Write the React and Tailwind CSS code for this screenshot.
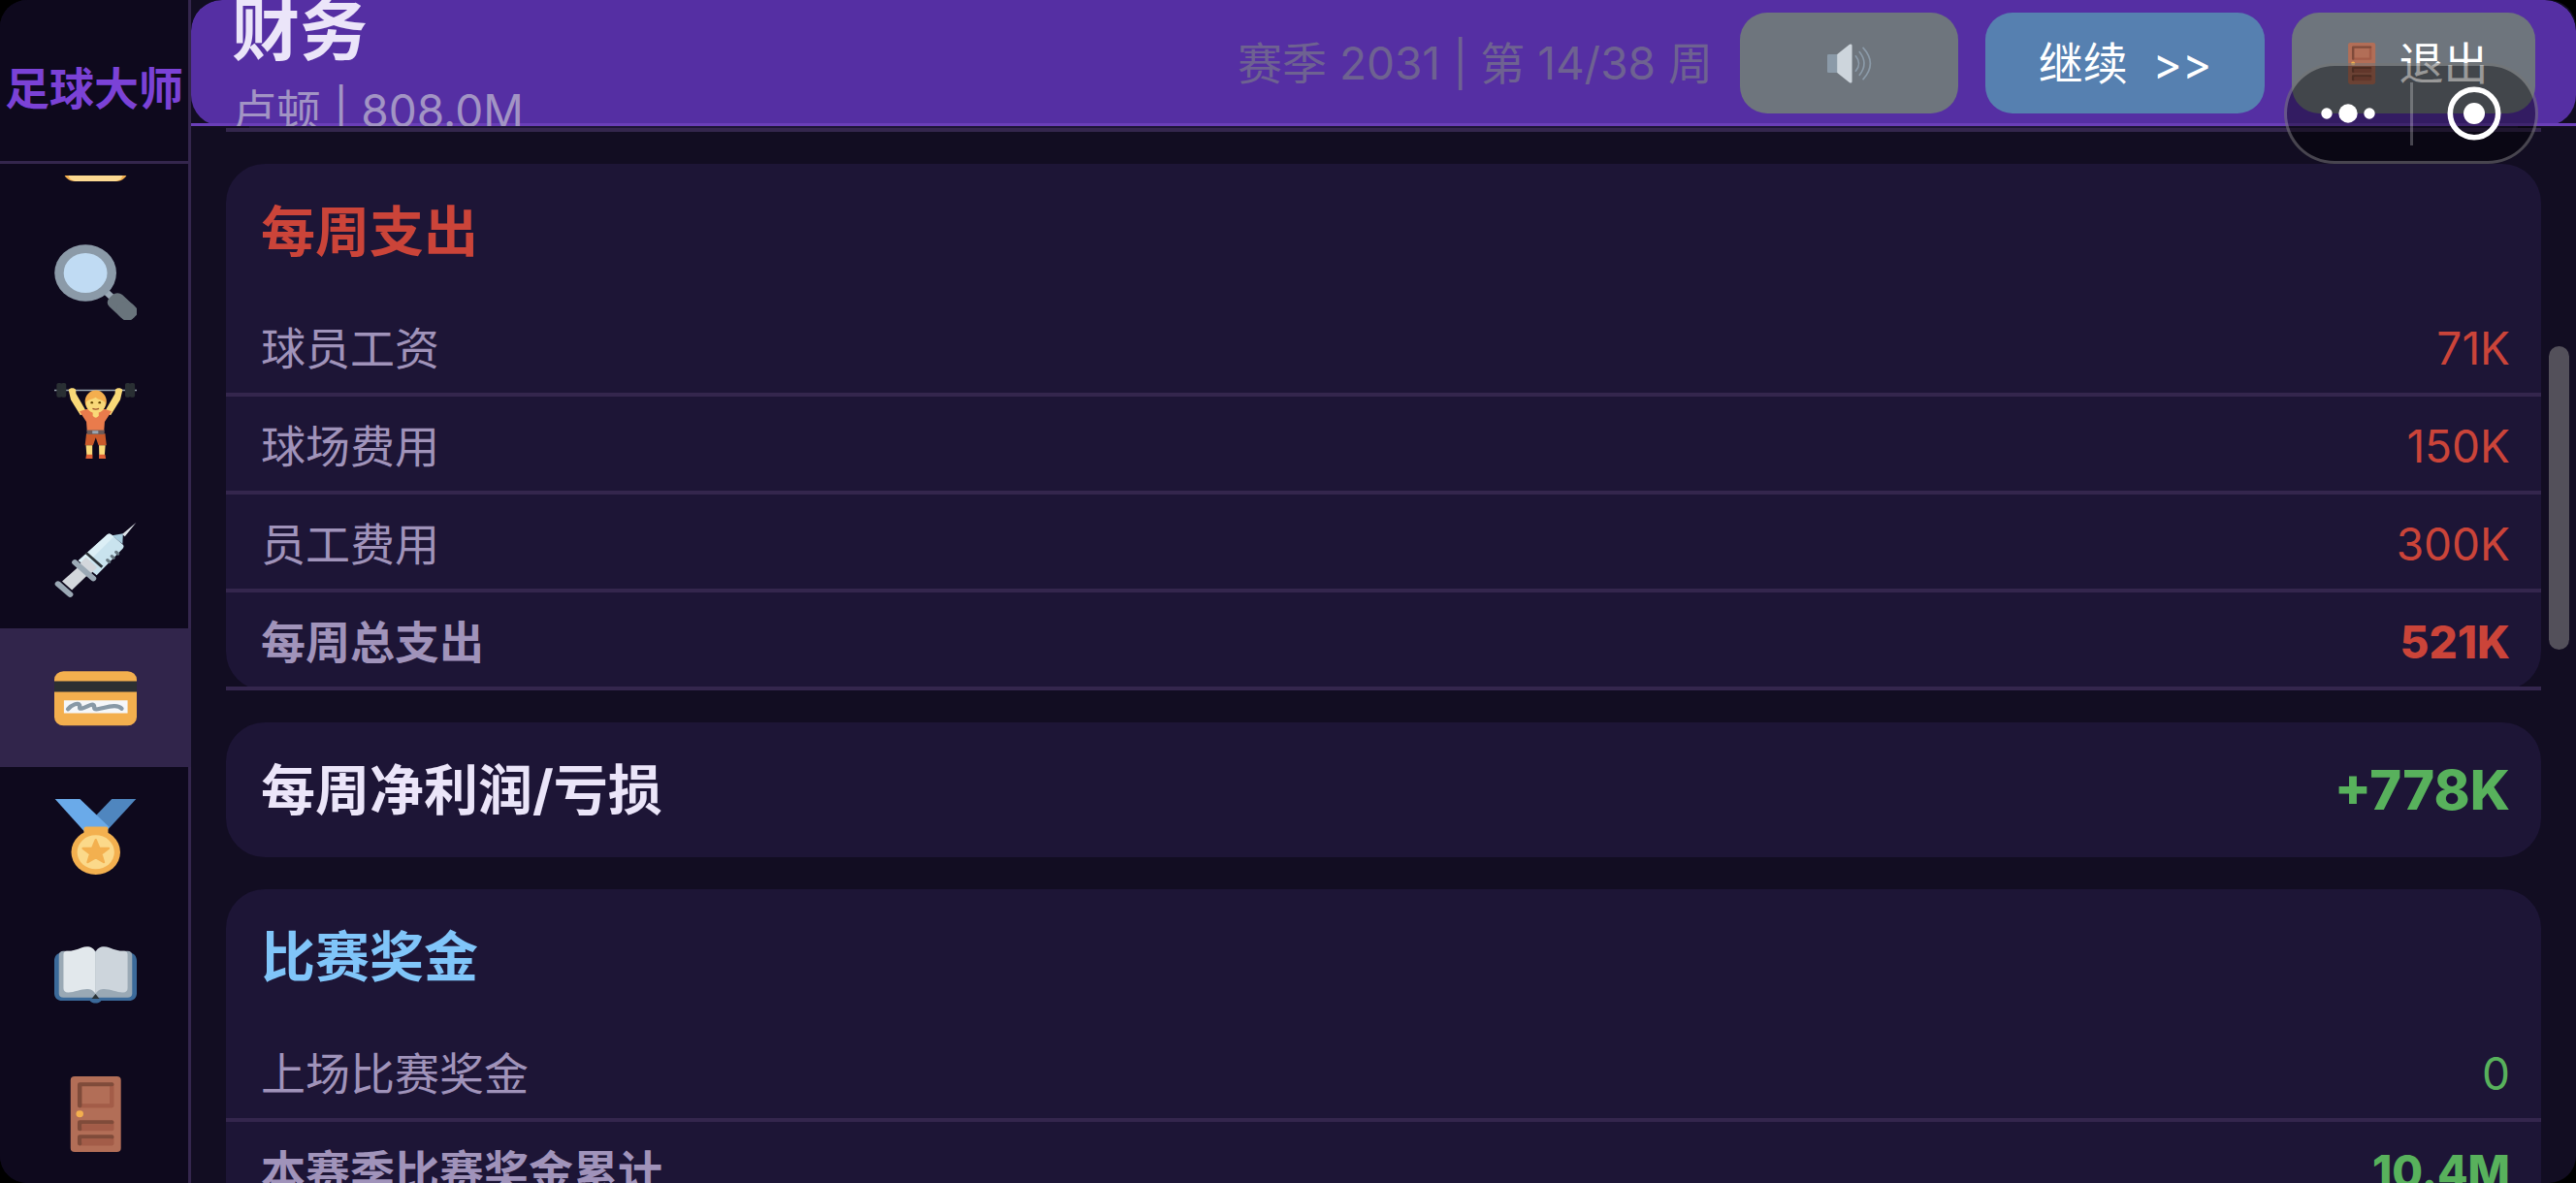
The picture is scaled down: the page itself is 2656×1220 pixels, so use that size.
import { useState } from 'react';

function Icon({ children, className = 'w-[85px] h-[78px]' }) {
  return (
    <svg viewBox="0 0 36 36" preserveAspectRatio="none" className={className} aria-hidden="true">
      {children}
    </svg>
  );
}

function NoteIcon() {
  return (
    <Icon>
      <rect x="4" y="0" width="28" height="36" rx="5" fill="#f4b050" />
      <path fill="#fcd992" d="M6 3h24v29c0 2.500-1.500 4-4 4H10c-2.500 0-4-1.500-4-4z" />
    </Icon>
  );
}

function SearchIcon() {
  return (
    <Icon>
      <g transform="rotate(45)">
        <rect x="31" y="-1.5" width="6" height="3" fill="#9aa8b5" />
        <rect x="35" y="-4" width="14.200" height="8" rx="3" fill="#69747c" />
        <rect x="40" y="-4" width="9.200" height="8" rx="4" fill="#69747c" />
      </g>
      <circle cx="13.600" cy="13.600" r="13.500" fill="#8b9aa8" />
      <circle cx="13.600" cy="13.600" r="9.500" fill="#c0dbf3" />
    </Icon>
  );
}

function LifterIcon() {
  return (
    <Icon>
      <path fill="#99a5b0" d="M0 3.100h36v.7H0z" />
      <g fill="#292f33">
        <rect x="1" y="0" width="2.300" height="6.800" rx=".8" />
        <rect x="2.900" y="0" width="2.300" height="6.800" rx=".8" />
        <rect x="30.900" y="0" width="2.300" height="6.800" rx=".8" />
        <rect x="32.900" y="0" width="2.300" height="6.800" rx=".8" />
      </g>
      <path fill="#f9d978" d="M6.200 3.200c.6-1 2.800-1 3.200.1l.1 1.800 4.500 8.500-2.600 1.800L7.200 8zM29.800 3.200c-.6-1-2.800-1-3.200.1l-.1 1.800-4.500 8.500 2.600 1.800L28.800 8z" />
      <path fill="#e97b4c" d="M14 12.500h8.200l2.800 1-3 5-.3 4.500h-7.400l-.3-4.500-3-5z" />
      <path fill="#f9d978" d="M16.800 13h2.600v2.500c-.6 1.300-2 1.300-2.600 0z" />
      <ellipse cx="18.100" cy="8.800" rx="4.700" ry="5.300" fill="#f4ae4e" />
      <path fill="#f9d978" d="M13.900 9.500c.3-1.800 2.500-1.500 4.200-2.700 1 1.300 3.600 1.200 4.200 2.700 0 3-2 4.900-4.200 4.900s-4.200-1.900-4.200-4.900z" />
      <circle cx="16.400" cy="9.300" r=".55" fill="#664500" />
      <circle cx="19.800" cy="9.300" r=".55" fill="#664500" />
      <path d="M16.700 12.200q1.400.7 2.800 0" stroke="#a0522d" strokeWidth=".6" fill="none" />
      <path fill="#c95a2b" d="M14 24h8.200l.6 5.600h-3.500L18.100 26l-1.200 3.600h-3.500z" />
      <path fill="#6b5a58" d="M14.200 22.400h7.700v2h-7.700z" />
      <path fill="#99a5b0" d="M16.600 22.700h2.600v1.400h-2.600z" />
      <path fill="#f9d978" d="M13.800 29.600h2.800v4.600h-2.500zM19.500 29.600h2.800l-.3 4.600h-2.400z" />
      <path fill="#dd5f35" d="M14 34h2.700v2h-3zM19.500 34h2.700l.3 2h-3z" />
    </Icon>
  );
}

function SyringeIcon() {
  return (
    <Icon>
      <path fill="#dbe1e6" d="M35.800.4l-5 6.600-1.200-1z" />
      <path fill="#a7cbdc" d="M25.200 6.600l4.800-1-.2 5z" />
      <path fill="#c9e3ee" d="M23 6.200q1-.9 2 0l5 4.800q.7.900-.2 1.900L18.500 25.500l-8-7z" />
      <path fill="#dceff6" d="M23 6.200q1-.9 2 0l1 .9-12.500 13.500-3-2z" />
      <path fill="#d3d7dc" d="M13.800 16.800l4.900 5-4.200 4.400-4.700-4.600zM10.200 21.800l4 3.900-6.500 6.800-4.300-4.100z" />
      <path stroke="#2c3438" strokeWidth="1.200" d="M13.900 14.800l7 6.800" />
      <path stroke="#9ba9b5" strokeWidth="2.600" strokeLinecap="round" d="M9 19.400l8 7.600M1.600 29.600l5.300 5" />
      <path stroke="#66767f" strokeWidth="1.400" strokeLinecap="round" d="M23.200 18.300l.8.8M25.100 16.400l.8.8M27 14.500l.8.8" />
    </Icon>
  );
}

function CardIcon() {
  return (
    <Icon>
      <rect y="5.200" width="36" height="25.800" rx="4" fill="#f3af4e" />
      <path fill="#2b2f32" d="M0 9.900h36v5.100H0z" />
      <path fill="#f5f7f9" d="M4.200 19h27.800v6.200H4.200z" />
      <path
        stroke="#8899a6"
        strokeWidth="1.900"
        strokeLinecap="round"
        strokeLinejoin="round"
        fill="none"
        d="M6 23.200c1.500-2 4.500-3.300 5-1.900.4 1.200-.6 2 1.200 1.500 1.800-.5 4.800-2.700 5.100-1.300.3 1.300-.3 2 1.700 1.700 2.800-.4 8.300-3 10.400-.2"
      />
    </Icon>
  );
}

function MedalIcon() {
  return (
    <Icon>
      <path fill="#4f86bf" d="M25.100 0h10.600L22.800 15.200l-4.600-7.400z" />
      <path fill="#6aaae9" d="M.3 0h10.900l12.700 13.300-1.300 2.700h-9z" />
      <circle cx="18.100" cy="25.300" r="10.700" fill="#f3b04f" />
      <rect x="12.900" y="13.200" width="10.600" height="4" rx="1" fill="#f3b04f" />
      <circle cx="18.100" cy="25.300" r="8.100" fill="#fbd98a" />
      <path
        fill="#f3b04f"
        stroke="#f3b04f"
        strokeLinejoin="round"
        d="M18.100 19.400l1.500 4 4.100.1-3.200 2.600 1.100 4-3.500-2.300-3.500 2.300 1.100-4-3.200-2.600 4.100-.1z"
      />
    </Icon>
  );
}

function BookIcon() {
  return (
    <Icon>
      <path fill="#3b6a9a" d="M3 7h30c2 .5 3 2 3 4v15.500c0 2-1.300 3.500-3.500 3.500H20.500c-1.300 1.600-3.700 1.600-5 0h-12C1.300 30 0 28.500 0 26.500V11c0-2 1-3.500 3-4z" />
      <path fill="#9aa9b5" d="M4 6.400h28c1.300 0 2 .8 2 2v18.200c0 1.200-.8 1.900-2 1.900H4c-1.200 0-2-.7-2-1.900V8.400c0-1.200.7-2 2-2z" />
      <path fill="#2c3438" d="M18 26.800l1.700 2.300h-3.400z" />
      <path fill="#e2e8ec" d="M18 7c-.8-2.700-3.500-3.200-6-2.300-2.300.9-4 1.700-6.500 1.700C4.500 6.400 4 7 4 8v16c0 1.400.8 2.200 2.200 2.100 3.800-.2 9.500-4 11.800.7z" />
      <path fill="#cdd5dc" d="M18 7c.8-2.700 3.500-3.200 6-2.300 2.300.9 4 1.700 6.500 1.700 1 0 1.500.6 1.500 1.600v16c0 1.400-.8 2.200-2.200 2.100-3.800-.2-9.500-4-11.800.7z" />
    </Icon>
  );
}

function DoorIcon({ className }) {
  return (
    <Icon className={className}>
      <rect x="7.100" y="0" width="22" height="36" rx="1.800" fill="#b26e57" />
      <g fill="none" strokeWidth="1.900" strokeLinecap="round" strokeLinejoin="round">
        <path stroke="#a35c48" d="M25.100 4v10H11.200M25.100 22v3H11.200M25.100 29v3H11.200" />
        <path stroke="#7f4b3a" d="M11.100 14V3.800h14M11.100 25v-3.200h14M11.100 32v-3.200h14" />
      </g>
      <path fill="#a35c48" d="M12 22.700h13v2.300H12zM12 29.700h13V32H12z" />
      <circle cx="11.100" cy="17.900" r="1.600" fill="#f3af4e" />
    </Icon>
  );
}

function SpeakerIcon() {
  return (
    <Icon className="w-[46px] h-[43px]">
      <rect y="10" width="10" height="16" rx="1" fill="#8b9aa8" />
      <path fill="#cdd5dc" d="M8 10L18 1.500q2-1 2 1v31q0 2-2 1L8 26z" />
      <g fill="none" stroke="#8b9aa8" strokeWidth="1.300" strokeLinecap="round">
        <path d="M23 11.500q5 6.500 0 13" />
        <path d="M26 8q7.500 10 0 20" />
        <path d="M29 4.500q11.500 13.500 0 27" />
      </g>
    </Icon>
  );
}

const navItems = [
  { id: 'notes', label: '记录', icon: NoteIcon },
  { id: 'scout', label: '球探', icon: SearchIcon },
  { id: 'training', label: '训练', icon: LifterIcon },
  { id: 'medical', label: '医疗', icon: SyringeIcon },
  { id: 'finance', label: '财务', icon: CardIcon },
  { id: 'honours', label: '荣誉', icon: MedalIcon },
  { id: 'guide', label: '指南', icon: BookIcon },
  { id: 'exit', label: '退出', icon: DoorIcon },
];

const expenses = [
  { label: '球员工资', value: '71K' },
  { label: '球场费用', value: '150K' },
  { label: '员工费用', value: '300K' },
  { label: '每周总支出', value: '521K', total: true },
];

const prizes = [
  { label: '上场比赛奖金', value: '0' },
  { label: '本赛季比赛奖金累计', value: '10.4M', total: true },
];

function Sidebar({ active, onSelect }) {
  return (
    <aside className="w-[197px] shrink-0 flex flex-col bg-[#0e091d] border-r-[3px] border-[#34264d]">
      <div className="h-[169px] shrink-0 flex items-center justify-center pt-4 border-b-[3px] border-[#34264d]">
        <span className="text-[46px] leading-[66px] font-bold text-[#7b42d6] whitespace-nowrap">足球大师</span>
      </div>
      <nav className="mt-3 -mr-[3px] flex-1 min-h-0 flex flex-col justify-end overflow-hidden">
        {navItems.map(({ id, label, icon: NavIcon }) => (
          <button
            key={id}
            type="button"
            aria-label={label}
            onClick={() => onSelect(id)}
            className={`h-[143px] shrink-0 flex items-center justify-center ${active === id ? 'bg-[#31254b]' : ''}`}
          >
            <NavIcon />
          </button>
        ))}
      </nav>
    </aside>
  );
}

function Header() {
  const btnCls = 'h-[104px] rounded-[28px] flex items-center justify-center text-white whitespace-pre';
  return (
    <header className="relative h-[130px] shrink-0 overflow-hidden rounded-t-[32px]">
      <div className="h-[130px] rounded-[32px] bg-[#552fa3]" />
      <div className="absolute inset-0 flex items-center justify-between pl-[42px] pr-[42px] border-b-[3px] border-[#6a3fb8]" />
      <div className="absolute inset-0 flex items-center justify-between pl-[42px] pr-[42px]">
        <div>
          <h1 className="text-[70px] leading-[98px] font-bold text-[#ebe5f9]">财务</h1>
          <p className="leading-[66px] text-[#a294c4]">卢顿 | 808.0M</p>
        </div>
        <div className="flex items-center gap-7">
          <span className="text-[#6e6291]">赛季 2031 | 第 14/38 周</span>
          <button type="button" aria-label="声音" className={`${btnCls} w-[225px] bg-[#6e757d]`}>
            <SpeakerIcon />
          </button>
          <button type="button" className={`${btnCls} w-[288px] bg-[#5680b0]`}>{'继续  >>'}</button>
          <button type="button" className={`${btnCls} w-[251px] gap-4 bg-[#6e757d]`}>
            <DoorIcon className="w-[46px] h-[43px]" />
            退出
          </button>
        </div>
      </div>
    </header>
  );
}

function Card({ title, titleCls, rows, valueCls }) {
  const cellCls = 'h-[101px] pt-1 border-b-4 border-[#34264d]';
  return (
    <section className="rounded-[40px] bg-[#1d1536]">
      <h2 className={`h-[139px] px-9 flex items-center text-[56px] font-bold ${titleCls}`}>{title}</h2>
      <table className="w-full border-separate border-spacing-0">
        <tbody>
          {rows.map(({ label, value, total }) => (
            <tr key={label}>
              <th scope="row" className={`${cellCls} pl-9 text-left text-[#a093ba] ${total ? 'font-bold' : 'font-normal'}`}>
                {label}
              </th>
              <td className={`${cellCls} pr-8 text-right ${valueCls} ${total ? 'font-extrabold' : ''}`}>{value}</td>
            </tr>
          ))}
        </tbody>
      </table>
    </section>
  );
}

// Floating mini-program capsule, top right
function Capsule() {
  return (
    <div className="absolute top-[65px] right-[39px] w-[262px] h-[104px] flex items-center rounded-full border-[3px] border-white/25 bg-black/40">
      <button type="button" aria-label="更多" className="flex-1 flex justify-center">
        <svg viewBox="0 0 56 20" className="w-14 h-5" fill="#fff">
          <circle cx="6" cy="10" r="5.700" />
          <circle cx="28" cy="10" r="9.700" />
          <circle cx="50" cy="10" r="5.700" />
        </svg>
      </button>
      <span className="w-[3px] h-[65px] bg-white/25" />
      <button type="button" aria-label="关闭" className="flex-1 flex justify-center">
        <svg viewBox="0 0 56 56" className="w-14 h-14">
          <circle cx="28" cy="28" r="24.700" fill="none" stroke="#fff" strokeWidth="5.600" />
          <circle cx="28" cy="28" r="11" fill="#fff" />
        </svg>
      </button>
    </div>
  );
}

export default function App() {
  const [active, setActive] = useState('finance');

  return (
    <div className="h-screen bg-black">
      <div className="relative h-full flex overflow-hidden rounded-[28px] bg-[#120d22] text-[46px] leading-[66px] font-[Inter,'Noto_Sans_CJK_SC',sans-serif]">
        <Sidebar active={active} onSelect={setActive} />

        <div className="flex-1 min-w-0 flex flex-col">
          <Header />
          <main className="relative flex-1 min-h-0 overflow-hidden px-9">
            <div className="flex flex-col gap-[33px]">
              {/* tail of the income card scrolled under the header */}
              <div className="h-[6px] border-b-4 border-[#34264d]">
                <div className="h-[2px] mx-6 bg-[#1d1536]" />
              </div>

              <Card title="每周支出" titleCls="text-[#cb4439]" rows={expenses} valueCls="text-[#cb4439]" />

              <section className="h-[139px] pl-9 pr-8 flex items-center justify-between rounded-[40px] bg-[#1d1536] text-[56px]">
                <h2 className="font-bold text-[#ebe5f9]">每周净利润/亏损</h2>
                <span className="font-extrabold text-[#58b15c]">+778K</span>
              </section>

              <Card title="比赛奖金" titleCls="text-[#80c5f9]" rows={prizes} valueCls="text-[#58b15c]" />
            </div>

            <div className="absolute right-[7px] top-[227px] w-[21px] h-[313px] rounded-full bg-[#53505a]" />
          </main>
        </div>

        <Capsule />
      </div>
    </div>
  );
}
